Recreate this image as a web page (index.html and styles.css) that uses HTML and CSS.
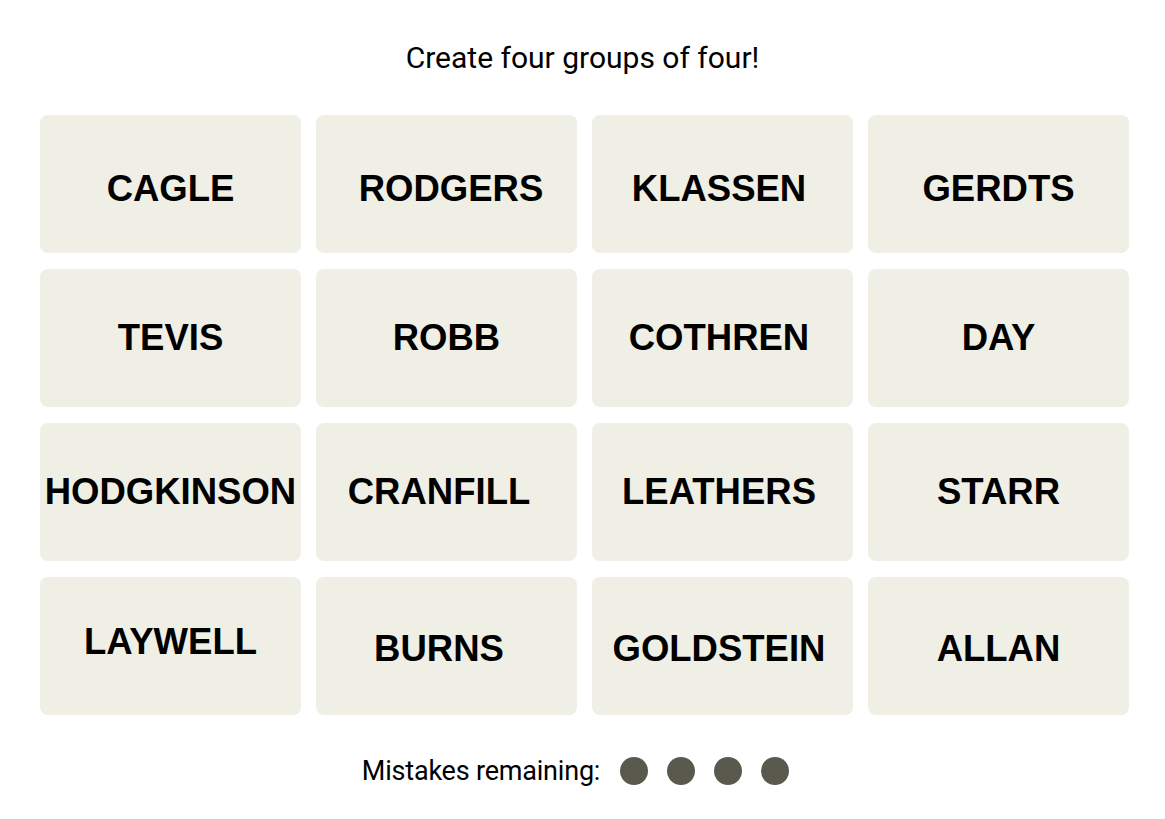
FILE: index.html
```html
<!DOCTYPE html>
<html lang="en">
<head>
<meta charset="utf-8">
<title>Connections</title>
<link rel="stylesheet" href="styles.css">
</head>
<body>
<main class="game">
  <h1 class="prompt">Create four groups of four!</h1>
  <section class="board">
    <div class="tile row1">CAGLE</div>
    <div class="tile row1 nudge-right">RODGERS</div>
    <div class="tile row1 nudge-left-sm">KLASSEN</div>
    <div class="tile row1">GERDTS</div>

    <div class="tile">TEVIS</div>
    <div class="tile">ROBB</div>
    <div class="tile nudge-left-sm">COTHREN</div>
    <div class="tile">DAY</div>

    <div class="tile">HODGKINSON</div>
    <div class="tile nudge-left">CRANFILL</div>
    <div class="tile nudge-left-sm">LEATHERS</div>
    <div class="tile">STARR</div>

    <div class="tile raised">LAYWELL</div>
    <div class="tile row4 nudge-left">BURNS</div>
    <div class="tile row4 nudge-left-sm">GOLDSTEIN</div>
    <div class="tile row4">ALLAN</div>
  </section>
  <footer class="mistakes">
    <span class="mistakes-label">Mistakes remaining:</span>
    <span class="dots">
      <span class="dot"></span>
      <span class="dot"></span>
      <span class="dot"></span>
      <span class="dot"></span>
    </span>
  </footer>
</main>
</body>
</html>
```
FILE: styles.css
```css
* { box-sizing: border-box; }

html, body {
  margin: 0;
  padding: 0;
  background: #ffffff;
}

body {
  font-family: "Roboto", "Liberation Sans", Arial, sans-serif;
  color: #000;
}

.game {
  display: flex;
  flex-direction: column;
  align-items: center;
  padding-top: 40px;
}

.prompt {
  margin: 0;
  font-size: 30px;
  font-weight: 400;
  line-height: 36px;
  letter-spacing: 0;
}

.board {
  margin-top: 39px;
  display: grid;
  grid-template-columns: repeat(4, 261px);
  grid-auto-rows: 138px;
  column-gap: 15px;
  row-gap: 16px;
  margin-left: 4px;
}

.tile {
  background: #efefe6;
  border-radius: 8px;
  display: flex;
  align-items: center;
  justify-content: center;
  font-family: "Liberation Sans", Arial, sans-serif;
  font-weight: 700;
  font-size: 36.5px;
  line-height: 40px;
  white-space: nowrap;
}

.row1 { padding-top: 10px; }
.row4 { padding-top: 6px; }
.raised { padding-bottom: 9px; }
.nudge-right { padding-left: 9px; }
.nudge-left { padding-right: 15px; }
.nudge-left-sm { padding-right: 7px; }

.mistakes {
  margin-top: 40px;
  display: flex;
  align-items: center;
  gap: 20px;
  margin-right: 14px;
}

.mistakes-label {
  font-size: 27px;
  line-height: 32px;
  letter-spacing: -0.2px;
}

.dots {
  display: flex;
  gap: 19px;
}

.dot {
  width: 28px;
  height: 28px;
  border-radius: 50%;
  background: #5a594e;
}
```
